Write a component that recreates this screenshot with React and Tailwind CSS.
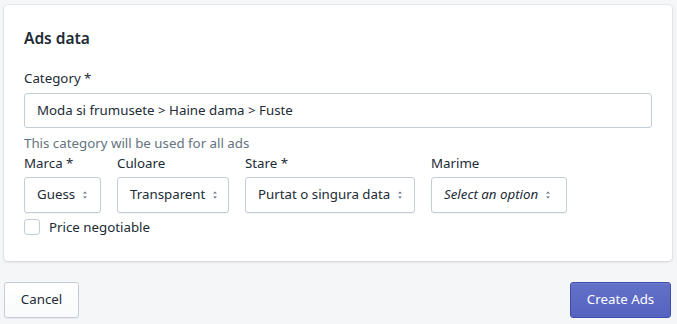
import React from "react";

function Caret() {
  return (
    <svg width="8" height="12" viewBox="0 0 8 12" className="ml-[6px] shrink-0">
      <path d="M2 4.5 L4 2.5 L6 4.5 Z" fill="#637381" />
      <path d="M2 7.5 L4 9.5 L6 7.5 Z" fill="#637381" />
    </svg>
  );
}

function Select({ label, value, italic, width }) {
  return (
    <div className="flex flex-col">
      <span className="h-[20px] leading-[20px] text-[13.3px] text-[#212b36]">{label}</span>
      <div className={"mt-[4px] h-[36px] flex items-center pl-[12px] pr-[10px] border border-[#c4cdd5] rounded-[3px] bg-white shadow-[0_1px_0_rgba(22,29,37,0.05)] " + width}>
        <span className={"text-[13.3px] text-[#212b36] whitespace-nowrap " + (italic ? "italic" : "")}>{value}</span>
        <Caret />
      </div>
    </div>
  );
}

export default function App() {
  return (
    <div className="w-[677px] h-[324px] bg-[#f4f6f8] pt-[5px] pl-[4px] pr-[5px]" style={{ fontFamily: '"Noto Sans", "Open Sans", sans-serif' }}>
      <div className="bg-white rounded-[4px] shadow-[0_0_0_1px_rgba(63,63,68,0.05),0_1px_3px_0_rgba(63,63,68,0.15)] h-[256px] px-[20px] pt-[20px]">
        <h2 className="text-[15.5px] font-semibold text-[#212b36] leading-[24px] mt-[1px]">Ads data</h2>
        <div className="mt-[18px] text-[13.3px] text-[#212b36] leading-[20px]">Category *</div>
        <div className="mt-[5px] h-[35px] border border-[#c4cdd5] rounded-[3px] flex items-center px-[12px] text-[13.3px] text-[#212b36] w-[628px]">
          Moda si frumusete &gt; Haine dama &gt; Fuste
        </div>
        <div className="mt-[5px] text-[13.3px] text-[#637381] leading-[20px]">This category will be used for all ads</div>
        <div className="flex gap-[16px]">
          <Select label="Marca *" value="Guess" width="w-[77px]" />
          <Select label="Culoare" value="Transparent" width="w-[112px]" />
          <Select label="Stare *" value="Purtat o singura data" width="w-[170px]" />
          <Select label="Marime" value="Select an option" italic width="w-[136px]" />
        </div>
        <label className="mt-[4px] flex items-center gap-[9px]">
          <span className="w-[16px] h-[16px] border border-[#c4cdd5] rounded-[3px] bg-white"></span>
          <span className="text-[13.3px] text-[#212b36] leading-[20px]">Price negotiable</span>
        </label>
      </div>
      <div className="mt-[21px] flex justify-between">
        <button className="h-[36px] w-[75px] border border-[#c4cdd5] rounded-[3px] bg-gradient-to-b from-white to-[#f9fafb] text-[13.3px] text-[#212b36] shadow-[0_1px_0_rgba(22,29,37,0.05)]">Cancel</button>
        <button className="h-[36px] w-[101px] mr-[1px] border border-[#3f4eae] rounded-[3px] bg-gradient-to-b from-[#6371c7] to-[#5563c1] text-[13.3px] text-white shadow-[inset_0_1px_0_0_#6f7bcb]">Create Ads</button>
      </div>
    </div>
  );
}
